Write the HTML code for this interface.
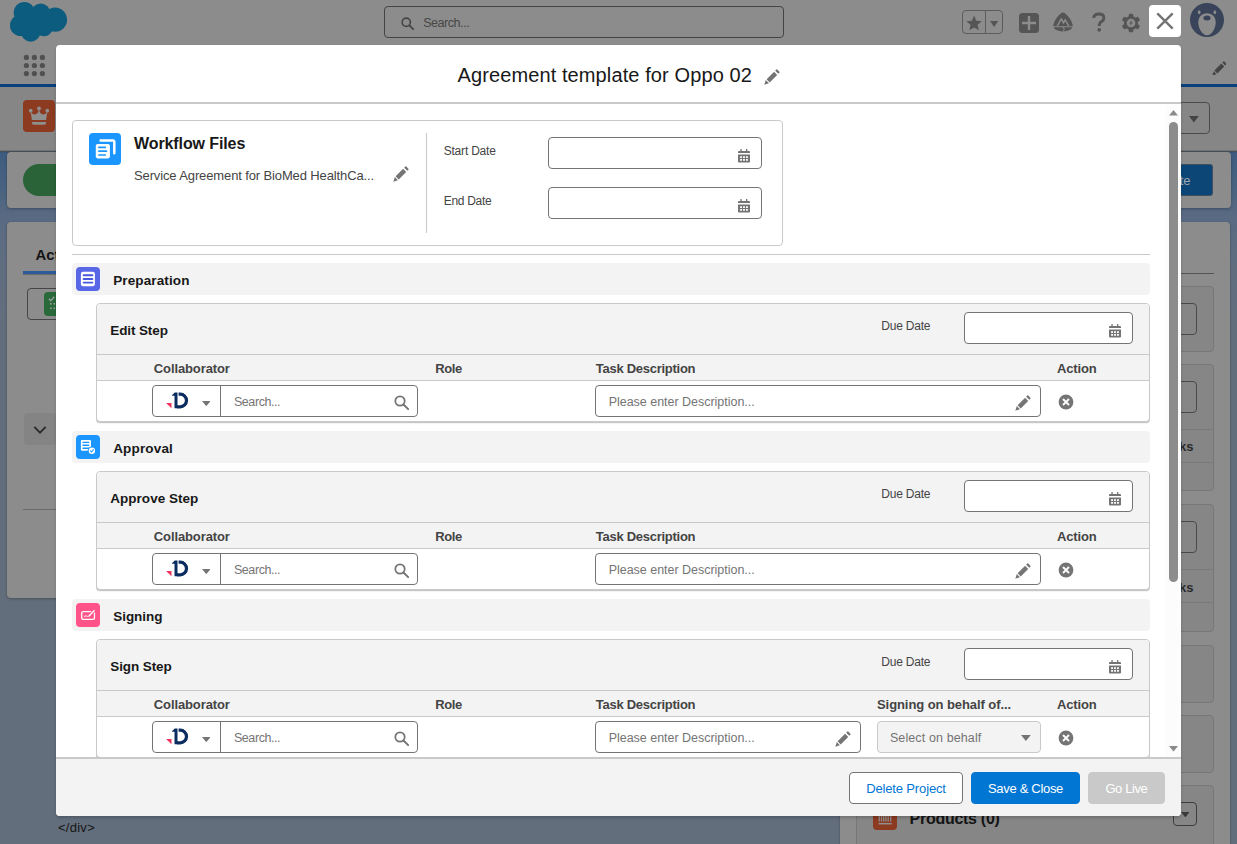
<!DOCTYPE html>
<html lang="en">
<head>
<meta charset="utf-8">
<title>Agreement template for Oppo 02</title>
<style>
*{box-sizing:border-box;margin:0;padding:0}
html,body{width:1237px;height:844px;overflow:hidden}
body{font-family:"Liberation Sans",sans-serif;font-size:13px;color:#181818;background:#636e7c;position:relative}
.abs{position:absolute}
span.t{position:absolute;white-space:nowrap;line-height:1}
/* ---------- dimmed background page ---------- */
#bg{position:absolute;left:0;top:0;width:1237px;height:844px;overflow:hidden;
  background:linear-gradient(180deg,#8c8c8c 0,#8c8c8c 151px,#3d5c80 152px,#4a6380 190px,#586a82 215px,#5f6d81 250px,#626e7e 300px,#636e7c 340px,#636e7c 100%)}
#ghead{left:0;top:0;width:1237px;height:87px;background:#8c8c8c;border-bottom:3px solid #07407a}
#phead{left:0;top:87px;width:1237px;height:64px;background:#868686;border-bottom:1px solid #727272;box-shadow:0 1px 1px rgba(0,0,0,.3)}
.gsearch{left:384px;top:6px;width:400px;height:32px;border:1px solid #444;border-radius:4px}
.dcard{background:#8c8c8c;border-radius:4px;box-shadow:0 1px 3px rgba(0,0,0,.28)}
.icard{background:#868686;border:1px solid #777;border-radius:4px}
.ibox{border:1px solid #4a4a4a;border-radius:4px}
/* ---------- modal ---------- */
#modal{left:56px;top:45px;width:1125px;height:771px;background:#fff;border-radius:4px;overflow:hidden;box-shadow:0 2px 3px rgba(0,0,0,.18)}
.band{width:1078px;height:32px;background:#f3f3f3;border-radius:4px}
.step{width:1054px;height:119px;background:#fff;border:1px solid #c9c9c9;border-radius:4px;box-shadow:0 1px 0 0 #c6c6c6,0 2px 1px rgba(0,0,0,.05);overflow:hidden}
.step .sh{left:0;top:0;width:1052px;height:50px;background:#f3f3f3}
.step .th{left:0;top:50px;width:1052px;height:27px;background:#f3f3f3;border-top:1px solid #c9c9c9;border-bottom:1px solid #c9c9c9}
.inp{background:#fff;border:1px solid #747474;border-radius:4px}
.hb{font-weight:bold;color:#444}
.ph{color:#747474}
.btn{height:32px;border-radius:4px;border:1px solid #747474;background:#fff}
</style>
</head>
<body>
<div id="bg" class="abs">
<div id="ghead" class="abs"></div>
<svg class="abs" style="left:8px;top:0px" width="62" height="44" viewBox="8 0 62 44"><g fill="#0b5c7e"><circle cx="24.3" cy="12.6" r="10.6"/><circle cx="40.7" cy="12.8" r="9.4"/><circle cx="55" cy="19.7" r="12.1"/><circle cx="20.7" cy="25.4" r="10.7"/><circle cx="30.7" cy="32" r="9.7"/><circle cx="44" cy="27.6" r="8.7"/><rect x="22" y="12" width="30" height="18"/></g></svg>
<svg class="abs" style="left:20px;top:50px" width="30" height="30" viewBox="20 50 30 30"><g fill="#505050"><circle cx="26.4" cy="57.4" r="2.600"/><circle cx="34.4" cy="57.4" r="2.600"/><circle cx="42.4" cy="57.4" r="2.600"/><circle cx="26.4" cy="65.5" r="2.600"/><circle cx="34.4" cy="65.5" r="2.600"/><circle cx="42.4" cy="65.5" r="2.600"/><circle cx="26.4" cy="73.6" r="2.600"/><circle cx="34.4" cy="73.6" r="2.600"/><circle cx="42.4" cy="73.6" r="2.600"/></g></svg>
<div class="abs gsearch"></div>
<svg class="abs" style="left:401.3px;top:17.3px" width="13.2" height="13.2" viewBox="0 0 16 16"><circle cx="6.4" cy="6.4" r="5" fill="none" stroke="#444" stroke-width="1.9"/><path d="M10.1 10.1l5 5" stroke="#444" stroke-width="2.1" stroke-linecap="round"/></svg>
<span id="t_gsrch" class="t " style="left:423.2px;top:16.52px;font-size:12.5px;color:#474747;letter-spacing:-0.448px">Search...</span>
<div class="abs" style="left:962px;top:10px;width:41px;height:24px;border:1px solid #5c5c5c;border-radius:4px"></div>
<div class="abs" style="left:985px;top:10px;width:1px;height:24px;background:#5c5c5c"></div>
<svg class="abs" style="left:965.900px;top:15px" width="16.200" height="16.200" viewBox="0 0 24 24"><path fill="#555" d="M12 .8l3.200 7.700 8.300.700-6.300 5.400 1.900 8.100L12 18.400 4.900 22.700l1.900-8.100L.5 9.200l8.300-.7z"/></svg>
<svg class="abs" style="left:990px;top:20.9px" width="8.2" height="6" viewBox="0 0 8.2 6"><path fill="#555" d="M0 0h8.2L4.1 6z"/></svg>
<svg class="abs" style="left:1019px;top:13px" width="20" height="20" viewBox="0 0 20 20"><rect width="20" height="20" rx="3.5" fill="#555"/><path d="M3 10h14M10 3v14" stroke="#8c8c8c" stroke-width="2.4"/></svg>
<svg class="abs" style="left:1053px;top:12.300px" width="20" height="21" viewBox="0 0 20 20" preserveAspectRatio="none"><path fill="#555" d="M10 .4q1.200 0 2.300 1 5.600 4.700 7.200 10.300.3 1.100.1 1.800H.4q-.2-.7.100-1.800Q2.100 6.100 7.700 1.400 8.800.4 10 .4z"/><path fill="#555" d="M.8 14.600h18.400q-.5 1.800-2.600 2.600-3.100 1.300-6.600 1.300T3.400 17.200Q1.300 16.400.8 14.600z"/><path d="M4.300 13.200l4-6.600 2.200 3.600 1.700-2.700 3.500 5.700" fill="none" stroke="#8c8c8c" stroke-width="1.500" stroke-linejoin="miter"/><path d="M9.800 14.400l1.400 1.700-.7 2.600" fill="none" stroke="#8c8c8c" stroke-width="1"/></svg>
<svg class="abs" style="left:1091px;top:11px" width="16" height="22" viewBox="0 0 16 22"><path d="M2.700 7.100q0-4.100 5.200-4.100 5 0 5 3.900 0 2.200-2.400 3.700-2.300 1.400-2.300 3.600v.9" fill="none" stroke="#555" stroke-width="2.900"/><circle cx="8.200" cy="18.800" r="1.850" fill="#555"/></svg>
<svg class="abs" style="left:1121px;top:12.500px" width="20" height="20" viewBox="-10 -10 20 20"><g fill="#555"><rect x="-2.300" y="-9.300" width="4.600" height="5" rx="1.200" transform="rotate(0)"/><rect x="-2.300" y="-9.300" width="4.600" height="5" rx="1.200" transform="rotate(60)"/><rect x="-2.300" y="-9.300" width="4.600" height="5" rx="1.200" transform="rotate(120)"/><rect x="-2.300" y="-9.300" width="4.600" height="5" rx="1.200" transform="rotate(180)"/><rect x="-2.300" y="-9.300" width="4.600" height="5" rx="1.200" transform="rotate(240)"/><rect x="-2.300" y="-9.300" width="4.600" height="5" rx="1.200" transform="rotate(300)"/><circle r="7"/></g><circle r="4.300" fill="#8c8c8c"/><path d="M.9-3.100L-1.900.5h1.700L-.9 3.100 1.900-.5H.2z" fill="#555"/></svg>
<svg class="abs" style="left:1190px;top:2.800px" width="34" height="34" viewBox="0 0 34 34"><circle cx="17" cy="17" r="17" fill="#39445a"/><path d="M17 10.300c5.300 0 8.700 3.700 8.700 9.200 0 5.600-3.800 12.700-8.700 12.700s-8.700-7.100-8.700-12.700c0-5.500 3.400-9.200 8.700-9.200z" fill="#8c8c8c"/><ellipse cx="17" cy="15" rx="3.600" ry="2.500" fill="#39445a"/><ellipse cx="9.200" cy="9.300" rx="1.300" ry="2" fill="#8c8c8c"/><ellipse cx="24.800" cy="9.300" rx="1.300" ry="2" fill="#8c8c8c"/></svg>
<svg class="abs" style="left:1211.7px;top:60.5px" width="14.8" height="14.8" viewBox="0 0 16 16"><g fill="#444"><path d="M0.3 15.7l1.5-4.6 3.1 3.1z"/><path d="M2.6 10.3l7.5-7.5 3.1 3.1-7.5 7.5z"/><path d="M11.2 1.7l1.1-1.1q.5-.5 1 0l2.1 2.1q.5.5 0 1l-1.1 1.1z"/></g></svg>
<div id="phead" class="abs"></div>
<svg class="abs" style="left:23px;top:100px" width="32" height="32" viewBox="0 0 32 32"><rect width="32" height="32" rx="4" fill="#8c3a20"/><g fill="#8f8f8f"><path d="M7.600 11.400L8.900 19.900H23.100L24.400 11.400Q22.600 14.600 20 14.400 17 14.100 16 9.500 15 14.100 12 14.400 9.400 14.600 7.600 11.400z"/><path d="M8.900 22h14.200v.8a2 2 0 0 1-2 2H10.900a2 2 0 0 1-2-2z"/><circle cx="7.700" cy="10.700" r="1.900"/><circle cx="16" cy="8.500" r="1.900"/><circle cx="24.300" cy="10.700" r="1.900"/></g></svg>
<div class="abs" style="left:1178px;top:102px;width:32px;height:32px;border:1px solid #4a4a4a;border-radius:4px"></div>
<svg class="abs" style="left:1189.3px;top:116.3px" width="9.8" height="6.6" viewBox="0 0 9.8 6.6"><path fill="#444" d="M0 0h9.8L4.9 6.6z"/></svg>
<div class="abs dcard" style="left:7px;top:152px;width:1223.500px;height:56px"></div>
<div class="abs" style="left:23px;top:164px;width:600px;height:32px;border-radius:16px;background:#296337"></div>
<div class="abs" style="left:1040px;top:164px;width:173px;height:32px;border-radius:4px;background:#0b4677;box-shadow:0 0 0 1px #3d4f63 inset"></div>
<span id="t_mark" class="t " style="left:1060px;top:173.50px;font-size:13px;color:#9ea6ae;left:auto;right:46.400px">Mark Stage as Complete</span>
<div class="abs dcard" style="left:7px;top:222px;width:820px;height:376px"></div>
<span id="t_actv" class="t " style="left:35.5px;top:247.87px;font-size:14.8px;font-weight:bold;color:#151515">Activity</span>
<div class="abs" style="left:23px;top:273.500px;width:790px;height:1px;background:#6c6c6c"></div>
<div class="abs" style="left:23px;top:271px;width:80px;height:3px;background:#2e5a9a"></div>
<div class="abs" style="left:27px;top:288px;width:120px;height:32px;border:1px solid #454545;border-radius:4px"></div>
<svg class="abs" style="left:44px;top:292px" width="24" height="24" viewBox="0 0 24 24"><rect width="24" height="24" rx="4" fill="#2a6a3a"/><path d="M5 6.800l1.800 1.900 3.500-4" stroke="#9c9c9c" stroke-width="1.300" fill="none"/><g fill="#9c9c9c"><rect x="6" y="11" width="1.600" height="1.600"/><rect x="9.400" y="11" width="1.600" height="1.600"/><rect x="6" y="15.500" width="1.600" height="1.600"/><rect x="9.400" y="15.500" width="1.600" height="1.600"/></g></svg>
<div class="abs" style="left:24px;top:413px;width:32px;height:32px;border-radius:4px;background:#848484"></div>
<svg class="abs" style="left:33px;top:425px" width="14" height="10" viewBox="0 0 14 10"><path d="M1.300 1.800L7 7.600l5.700-5.800" fill="none" stroke="#2a2a2a" stroke-width="1.800"/></svg>
<div class="abs" style="left:23px;top:509px;width:790px;height:1px;background:#6a6a6a"></div>
<div class="abs dcard" style="left:840px;top:222px;width:390px;height:640px"></div>
<div class="abs" style="left:856px;top:273px;width:358px;height:1px;background:#555"></div>
<div class="abs icard" style="left:856px;top:286px;width:358px;height:66px"></div>
<div class="abs ibox" style="left:1000px;top:303px;width:197px;height:32px"></div>
<div class="abs icard" style="left:856px;top:364px;width:358px;height:127px"></div>
<div class="abs ibox" style="left:1000px;top:381px;width:197px;height:32px"></div>
<div class="abs" style="left:857px;top:429px;width:356px;height:1px;background:#7a7a7a"></div><div class="abs" style="left:857px;top:462px;width:356px;height:1px;background:#7a7a7a"></div>
<span id="t_ks1" class="t " style="left:1100px;top:439.70px;font-size:13px;font-weight:bold;color:#2b2b2b;left:auto;right:43.500px">Tasks</span>
<div class="abs icard" style="left:856px;top:504px;width:358px;height:128px"></div>
<div class="abs ibox" style="left:1000px;top:521px;width:197px;height:32px"></div>
<div class="abs" style="left:857px;top:569px;width:356px;height:1px;background:#7a7a7a"></div><div class="abs" style="left:857px;top:602px;width:356px;height:1px;background:#7a7a7a"></div>
<span id="t_ks2" class="t " style="left:1100px;top:580.80px;font-size:13px;font-weight:bold;color:#2b2b2b;left:auto;right:43.500px">Tasks</span>
<div class="abs icard" style="left:856px;top:645px;width:358px;height:58px"></div>
<div class="abs icard" style="left:856px;top:715px;width:358px;height:58px"></div>
<div class="abs icard" style="left:856px;top:785px;width:358px;height:80px"></div>
<svg class="abs" style="left:873px;top:806px" width="24" height="24" viewBox="0 0 24 24"><rect width="24" height="24" rx="4" fill="#8c3a20"/><path d="M6.300 5v10.500M8.500 5v10.500M10.700 5v10.500M12.900 5v10.500M15.200 5v10.500M17.700 5v10.500" stroke="#8f8f8f" stroke-width="1.300"/><path d="M5.500 17.700h13.200" stroke="#8f8f8f" stroke-width="1.500"/></svg>
<span id="t_prod" class="t " style="left:909.6px;top:811.36px;font-size:16px;font-weight:bold;color:#151515;letter-spacing:-0.279px">Products (0)</span>
<div class="abs" style="left:1173px;top:802px;width:24px;height:24px;border:1px solid #3d3d3d;border-radius:4px"></div>
<svg class="abs" style="left:1180.7px;top:811.8px" width="8.6" height="5.4" viewBox="0 0 8.6 5.4"><path fill="#3a3a3a" d="M0 0h8.6L4.3 5.4z"/></svg>
<span id="t_div" class="t " style="left:58px;top:820.60px;font-size:13px;color:#151515;letter-spacing:0.263px">&lt;/div&gt;</span>
</div>
<div id="modal" class="abs">
<div class="abs" style="left:-56px;top:-45px;width:1237px;height:844px">
<div class="abs" style="left:56px;top:102px;width:1125px;height:2px;background:#c9c9c9"></div>
<span id="t_title" class="t " style="left:457.5px;top:65.27px;font-size:20px;letter-spacing:0.107px">Agreement template for Oppo 02</span>
<svg class="abs" style="left:764.3px;top:68.6px" width="16" height="16" viewBox="0 0 16 16"><g fill="#747474"><path d="M0.3 15.7l1.5-4.6 3.1 3.1z"/><path d="M2.6 10.3l7.5-7.5 3.1 3.1-7.5 7.5z"/><path d="M11.2 1.7l1.1-1.1q.5-.5 1 0l2.1 2.1q.5.5 0 1l-1.1 1.1z"/></g></svg>
<div class="abs" style="left:56px;top:104px;width:1125px;height:653px;overflow:hidden"><div class="abs" style="left:-56px;top:-104px;width:1237px;height:900px">
<div class="abs" style="left:72px;top:120px;width:711px;height:126px;border:1px solid #c9c9c9;border-radius:4px;background:#fff"></div>
<svg class="abs" style="left:89px;top:133px" width="32" height="32" viewBox="0 0 32 32"><rect width="32" height="32" rx="4" fill="#1b96ff"/><path d="M11.6 7.6h12.5a1.2 1.2 0 0 1 1.200 1.2v11.4" fill="none" stroke="#fff" stroke-width="2.5" stroke-linecap="round"/><rect x="6.8" y="10.9" width="14.1" height="14.5" rx="1.8" fill="#fff"/><path d="M9.9 14.4h6.4M9.9 18.2h7.6M9.9 22h6.4" stroke="#1b96ff" stroke-width="1.7" stroke-linecap="round"/></svg>
<span id="t_wf" class="t " style="left:134px;top:136.46px;font-size:16px;font-weight:bold;letter-spacing:-0.101px">Workflow Files</span>
<span id="t_svc" class="t " style="left:134px;top:168.80px;font-size:13px;color:#444;letter-spacing:-0.124px">Service Agreement for BioMed HealthCa...</span>
<svg class="abs" style="left:393px;top:166.3px" width="16" height="16" viewBox="0 0 16 16"><g fill="#747474"><path d="M0.3 15.7l1.5-4.6 3.1 3.1z"/><path d="M2.6 10.3l7.5-7.5 3.1 3.1-7.5 7.5z"/><path d="M11.2 1.7l1.1-1.1q.5-.5 1 0l2.1 2.1q.5.5 0 1l-1.1 1.1z"/></g></svg>
<div class="abs" style="left:426px;top:133px;width:1px;height:100px;background:#c9c9c9"></div>
<span id="t_sd" class="t " style="left:443.7px;top:144.84px;font-size:12px;color:#444;letter-spacing:-0.203px">Start Date</span>
<span id="t_ed" class="t " style="left:443.7px;top:194.54px;font-size:12px;color:#444;letter-spacing:-0.306px">End Date</span>
<div class="abs inp" style="left:548px;top:137px;width:214px;height:32px"></div>
<div class="abs inp" style="left:548px;top:187px;width:214px;height:32px"></div>
<svg class="abs" style="left:738px;top:149px" width="12" height="14" viewBox="0 0 12 14"><path fill="#747474" d="M2.4 0h1.3v2H2.4zM8 0h1.3v2H8zM0 2.9Q0 2 .9 2h10.2q.9 0 .9.9v1H0zM0 5.4h12v7.2q0 1-1 1H1q-1 0-1-1zM2.1 7.3v1.6h1.9V7.3zm2.95 0v1.6h1.9V7.3zm2.95 0v1.6h1.9V7.3zM2.1 10.1v1.6h1.9v-1.6zm2.95 0v1.6h1.9v-1.6zm2.95 0v1.6h1.9v-1.6z" fill-rule="evenodd"/></svg>
<svg class="abs" style="left:738px;top:199px" width="12" height="14" viewBox="0 0 12 14"><path fill="#747474" d="M2.4 0h1.3v2H2.4zM8 0h1.3v2H8zM0 2.9Q0 2 .9 2h10.2q.9 0 .9.9v1H0zM0 5.4h12v7.2q0 1-1 1H1q-1 0-1-1zM2.1 7.3v1.6h1.9V7.3zm2.95 0v1.6h1.9V7.3zm2.95 0v1.6h1.9V7.3zM2.1 10.1v1.6h1.9v-1.6zm2.95 0v1.6h1.9v-1.6zm2.95 0v1.6h1.9v-1.6z" fill-rule="evenodd"/></svg>
<div class="abs" style="left:72px;top:254px;width:1078px;height:1px;background:#c9c9c9"></div>
<div class="abs band" style="left:72px;top:263px"></div>
<svg class="abs" style="left:76px;top:267px" width="24" height="24" viewBox="0 0 24 24"><rect width="24" height="24" rx="4" fill="#5867e8"/><rect x="4.9" y="4.7" width="14" height="14.5" rx="2.2" fill="#fff"/><path d="M7.6 8.3h8.8M7.6 11.95h8.8M7.6 15.6h8.8" stroke="#4a58e0" stroke-width="1.9" stroke-linecap="round"/></svg>
<span id="t_prep" class="t " style="left:113.2px;top:273.97px;font-size:13.5px;font-weight:bold;letter-spacing:0.124px">Preparation</span>
<div class="abs step" style="left:96px;top:303px"><div class="abs sh"></div><div class="abs th"></div></div>
<span id="t_edit" class="t " style="left:110.3px;top:324.07px;font-size:13.5px;font-weight:bold;letter-spacing:-0.113px">Edit Step</span>
<span id="t_dueedit" class="t " style="left:881.3px;top:320.14px;font-size:12px;color:#444;letter-spacing:-0.213px">Due Date</span>
<div class="abs inp" style="left:964px;top:312px;width:169px;height:32px"></div>
<svg class="abs" style="left:1109px;top:324px" width="12" height="14" viewBox="0 0 12 14"><path fill="#747474" d="M2.4 0h1.3v2H2.4zM8 0h1.3v2H8zM0 2.9Q0 2 .9 2h10.2q.9 0 .9.9v1H0zM0 5.4h12v7.2q0 1-1 1H1q-1 0-1-1zM2.1 7.3v1.6h1.9V7.3zm2.95 0v1.6h1.9V7.3zm2.95 0v1.6h1.9V7.3zM2.1 10.1v1.6h1.9v-1.6zm2.95 0v1.6h1.9v-1.6zm2.95 0v1.6h1.9v-1.6z" fill-rule="evenodd"/></svg>
<span id="t_coledit" class="t hb" style="left:153.8px;top:361.80px;font-size:13px;letter-spacing:-0.108px">Collaborator</span>
<span id="t_roleedit" class="t hb" style="left:435.3px;top:361.80px;font-size:13px;letter-spacing:-0.443px">Role</span>
<span id="t_taskedit" class="t hb" style="left:595.8px;top:361.80px;font-size:13px;letter-spacing:-0.269px">Task Description</span>
<span id="t_actedit" class="t hb" style="left:1057px;top:361.80px;font-size:13px;letter-spacing:-0.159px">Action</span>
<div class="abs inp" style="left:152px;top:385px;width:266px;height:32px"></div>
<div class="abs" style="left:220px;top:385px;width:1px;height:32px;background:#747474"></div>
<svg class="abs" style="left:165.7px;top:391.8px" width="24" height="18" viewBox="0 0 24 18"><path fill="#f0325c" d="M0.100 10.900h5.400v5.400z"/><path fill="#0b2c5f" d="M8.500 0.500h3v15.800h-3zM8.600 0.500v3.300H5.600z"/><path fill="none" stroke="#0b2c5f" stroke-width="3.200" d="M12.600 2.200h1.600a6.300 6.300 0 0 1 0 12.600H11"/></svg>
<svg class="abs" style="left:201.6px;top:401.3px" width="8.6" height="5.2" viewBox="0 0 8.6 5.2"><path fill="#747474" d="M0 0h8.6L4.3 5.2z"/></svg>
<span id="t_srchedit" class="t ph" style="left:233.9px;top:396.12px;font-size:12.5px;letter-spacing:-0.415px">Search...</span>
<svg class="abs" style="left:394px;top:394.5px" width="15" height="15" viewBox="0 0 16 16"><circle cx="6.4" cy="6.4" r="5" fill="none" stroke="#747474" stroke-width="1.9"/><path d="M10.1 10.1l5 5" stroke="#747474" stroke-width="2.1" stroke-linecap="round"/></svg>
<div class="abs inp" style="left:595px;top:385px;width:446px;height:32px"></div>
<span id="t_descedit" class="t ph" style="left:608.7px;top:396.12px;font-size:12.5px;letter-spacing:-0.023px">Please enter Description...</span>
<svg class="abs" style="left:1015px;top:394.7px" width="16" height="16" viewBox="0 0 16 16"><g fill="#747474"><path d="M0.3 15.7l1.5-4.6 3.1 3.1z"/><path d="M2.6 10.3l7.5-7.5 3.1 3.1-7.5 7.5z"/><path d="M11.2 1.7l1.1-1.1q.5-.5 1 0l2.1 2.1q.5.5 0 1l-1.1 1.1z"/></g></svg>
<svg class="abs" style="left:1058px;top:394px" width="16" height="16" viewBox="0 0 16 16"><circle cx="8" cy="8" r="7.4" fill="#747474"/><path d="M5 5l6 6M11 5l-6 6" stroke="#fff" stroke-width="1.9" stroke-linecap="butt" fill="none"/></svg>
<div class="abs band" style="left:72px;top:431px"></div>
<svg class="abs" style="left:76px;top:435px" width="24" height="24" viewBox="0 0 24 24"><rect width="24" height="24" rx="4" fill="#1b96ff"/><rect x="4.9" y="4.9" width="10.1" height="10.8" rx="1.2" fill="#fff"/><path d="M7 7.4h5.7M7 10.3h5.7M7 13.2h5.7" stroke="#1b96ff" stroke-width="1.4" stroke-linecap="round"/><circle cx="15.9" cy="15.7" r="4.3" fill="#1b96ff"/><circle cx="15.9" cy="15.7" r="3.2" fill="#fff"/><path d="M14.3 15.7l1.2 1.3 2.1-2.7" stroke="#1b96ff" stroke-width="1.1" fill="none"/></svg>
<span id="t_appr" class="t " style="left:113.2px;top:441.97px;font-size:13.5px;font-weight:bold;letter-spacing:0.161px">Approval</span>
<div class="abs step" style="left:96px;top:471px"><div class="abs sh"></div><div class="abs th"></div></div>
<span id="t_approve" class="t " style="left:110.3px;top:492.07px;font-size:13.5px;font-weight:bold;letter-spacing:0.02px">Approve Step</span>
<span id="t_dueapprove" class="t " style="left:881.3px;top:488.14px;font-size:12px;color:#444;letter-spacing:-0.213px">Due Date</span>
<div class="abs inp" style="left:964px;top:480px;width:169px;height:32px"></div>
<svg class="abs" style="left:1109px;top:492px" width="12" height="14" viewBox="0 0 12 14"><path fill="#747474" d="M2.4 0h1.3v2H2.4zM8 0h1.3v2H8zM0 2.9Q0 2 .9 2h10.2q.9 0 .9.9v1H0zM0 5.4h12v7.2q0 1-1 1H1q-1 0-1-1zM2.1 7.3v1.6h1.9V7.3zm2.95 0v1.6h1.9V7.3zm2.95 0v1.6h1.9V7.3zM2.1 10.1v1.6h1.9v-1.6zm2.95 0v1.6h1.9v-1.6zm2.95 0v1.6h1.9v-1.6z" fill-rule="evenodd"/></svg>
<span id="t_colapprove" class="t hb" style="left:153.8px;top:529.80px;font-size:13px;letter-spacing:-0.108px">Collaborator</span>
<span id="t_roleapprove" class="t hb" style="left:435.3px;top:529.80px;font-size:13px;letter-spacing:-0.443px">Role</span>
<span id="t_taskapprove" class="t hb" style="left:595.8px;top:529.80px;font-size:13px;letter-spacing:-0.269px">Task Description</span>
<span id="t_actapprove" class="t hb" style="left:1057px;top:529.80px;font-size:13px;letter-spacing:-0.159px">Action</span>
<div class="abs inp" style="left:152px;top:553px;width:266px;height:32px"></div>
<div class="abs" style="left:220px;top:553px;width:1px;height:32px;background:#747474"></div>
<svg class="abs" style="left:165.7px;top:559.8px" width="24" height="18" viewBox="0 0 24 18"><path fill="#f0325c" d="M0.100 10.900h5.400v5.400z"/><path fill="#0b2c5f" d="M8.500 0.500h3v15.800h-3zM8.600 0.500v3.300H5.600z"/><path fill="none" stroke="#0b2c5f" stroke-width="3.200" d="M12.600 2.200h1.600a6.300 6.300 0 0 1 0 12.600H11"/></svg>
<svg class="abs" style="left:201.6px;top:569.3px" width="8.6" height="5.2" viewBox="0 0 8.6 5.2"><path fill="#747474" d="M0 0h8.6L4.3 5.2z"/></svg>
<span id="t_srchapprove" class="t ph" style="left:233.9px;top:564.12px;font-size:12.5px;letter-spacing:-0.415px">Search...</span>
<svg class="abs" style="left:394px;top:562.5px" width="15" height="15" viewBox="0 0 16 16"><circle cx="6.4" cy="6.4" r="5" fill="none" stroke="#747474" stroke-width="1.9"/><path d="M10.1 10.1l5 5" stroke="#747474" stroke-width="2.1" stroke-linecap="round"/></svg>
<div class="abs inp" style="left:595px;top:553px;width:446px;height:32px"></div>
<span id="t_descapprove" class="t ph" style="left:608.7px;top:564.12px;font-size:12.5px;letter-spacing:-0.023px">Please enter Description...</span>
<svg class="abs" style="left:1015px;top:562.7px" width="16" height="16" viewBox="0 0 16 16"><g fill="#747474"><path d="M0.3 15.7l1.5-4.6 3.1 3.1z"/><path d="M2.6 10.3l7.5-7.5 3.1 3.1-7.5 7.5z"/><path d="M11.2 1.7l1.1-1.1q.5-.5 1 0l2.1 2.1q.5.5 0 1l-1.1 1.1z"/></g></svg>
<svg class="abs" style="left:1058px;top:562px" width="16" height="16" viewBox="0 0 16 16"><circle cx="8" cy="8" r="7.4" fill="#747474"/><path d="M5 5l6 6M11 5l-6 6" stroke="#fff" stroke-width="1.9" stroke-linecap="butt" fill="none"/></svg>
<div class="abs band" style="left:72px;top:599px"></div>
<svg class="abs" style="left:76px;top:603px" width="24" height="24" viewBox="0 0 24 24"><rect width="24" height="24" rx="4" fill="#ff538a"/><rect x="5.7" y="8.6" width="12.8" height="7.8" rx="1.6" fill="none" stroke="#fff" stroke-width="1.3"/><path d="M8 13.6q1.2-1.1 2.3-.6t2.2.4" stroke="#fff" stroke-width="1" fill="none"/><path d="M12.6 13.5l5.9-6.3" stroke="#ff538a" stroke-width="3.2"/><path d="M12.6 13.5l5.9-6.3" stroke="#fff" stroke-width="1.3"/></svg>
<span id="t_signing" class="t " style="left:113.2px;top:609.97px;font-size:13.5px;font-weight:bold;letter-spacing:-0.029px">Signing</span>
<div class="abs step" style="left:96px;top:639px"><div class="abs sh"></div><div class="abs th"></div></div>
<span id="t_sign" class="t " style="left:110.3px;top:660.07px;font-size:13.5px;font-weight:bold;letter-spacing:-0.096px">Sign Step</span>
<span id="t_duesign" class="t " style="left:881.3px;top:656.14px;font-size:12px;color:#444;letter-spacing:-0.213px">Due Date</span>
<div class="abs inp" style="left:964px;top:648px;width:169px;height:32px"></div>
<svg class="abs" style="left:1109px;top:660px" width="12" height="14" viewBox="0 0 12 14"><path fill="#747474" d="M2.4 0h1.3v2H2.4zM8 0h1.3v2H8zM0 2.9Q0 2 .9 2h10.2q.9 0 .9.9v1H0zM0 5.4h12v7.2q0 1-1 1H1q-1 0-1-1zM2.1 7.3v1.6h1.9V7.3zm2.95 0v1.6h1.9V7.3zm2.95 0v1.6h1.9V7.3zM2.1 10.1v1.6h1.9v-1.6zm2.95 0v1.6h1.9v-1.6zm2.95 0v1.6h1.9v-1.6z" fill-rule="evenodd"/></svg>
<span id="t_colsign" class="t hb" style="left:153.8px;top:697.80px;font-size:13px;letter-spacing:-0.108px">Collaborator</span>
<span id="t_rolesign" class="t hb" style="left:435.3px;top:697.80px;font-size:13px;letter-spacing:-0.443px">Role</span>
<span id="t_tasksign" class="t hb" style="left:595.8px;top:697.80px;font-size:13px;letter-spacing:-0.269px">Task Description</span>
<span id="t_actsign" class="t hb" style="left:1057px;top:697.80px;font-size:13px;letter-spacing:-0.159px">Action</span>
<div class="abs inp" style="left:152px;top:721px;width:266px;height:32px"></div>
<div class="abs" style="left:220px;top:721px;width:1px;height:32px;background:#747474"></div>
<svg class="abs" style="left:165.7px;top:727.8px" width="24" height="18" viewBox="0 0 24 18"><path fill="#f0325c" d="M0.100 10.900h5.400v5.400z"/><path fill="#0b2c5f" d="M8.500 0.500h3v15.800h-3zM8.600 0.500v3.300H5.600z"/><path fill="none" stroke="#0b2c5f" stroke-width="3.200" d="M12.600 2.200h1.600a6.300 6.300 0 0 1 0 12.600H11"/></svg>
<svg class="abs" style="left:201.6px;top:737.3px" width="8.6" height="5.2" viewBox="0 0 8.6 5.2"><path fill="#747474" d="M0 0h8.6L4.3 5.2z"/></svg>
<span id="t_srchsign" class="t ph" style="left:233.9px;top:732.12px;font-size:12.5px;letter-spacing:-0.415px">Search...</span>
<svg class="abs" style="left:394px;top:730.5px" width="15" height="15" viewBox="0 0 16 16"><circle cx="6.4" cy="6.4" r="5" fill="none" stroke="#747474" stroke-width="1.9"/><path d="M10.1 10.1l5 5" stroke="#747474" stroke-width="2.1" stroke-linecap="round"/></svg>
<div class="abs inp" style="left:595px;top:721px;width:266px;height:32px"></div>
<span id="t_descsign" class="t ph" style="left:608.7px;top:732.12px;font-size:12.5px;letter-spacing:-0.023px">Please enter Description...</span>
<svg class="abs" style="left:835px;top:730.7px" width="16" height="16" viewBox="0 0 16 16"><g fill="#747474"><path d="M0.3 15.7l1.5-4.6 3.1 3.1z"/><path d="M2.6 10.3l7.5-7.5 3.1 3.1-7.5 7.5z"/><path d="M11.2 1.7l1.1-1.1q.5-.5 1 0l2.1 2.1q.5.5 0 1l-1.1 1.1z"/></g></svg>
<span id="t_sob" class="t hb" style="left:877px;top:697.80px;font-size:13px;letter-spacing:-0.077px">Signing on behalf of...</span>
<div class="abs" style="left:877px;top:721px;width:164px;height:32px;background:#f3f3f3;border:1px solid #c9c9c9;border-radius:4px"></div>
<span id="t_selob" class="t ph" style="left:889.9px;top:732.12px;font-size:12.5px;letter-spacing:0.115px">Select on behalf</span>
<svg class="abs" style="left:1020.8px;top:735.3px" width="9.8" height="6" viewBox="0 0 9.8 6"><path fill="#747474" d="M0 0h9.8L4.9 6z"/></svg>
<svg class="abs" style="left:1058px;top:730px" width="16" height="16" viewBox="0 0 16 16"><circle cx="8" cy="8" r="7.4" fill="#747474"/><path d="M5 5l6 6M11 5l-6 6" stroke="#fff" stroke-width="1.9" stroke-linecap="butt" fill="none"/></svg>
<div class="abs" style="left:1166px;top:105px;width:14px;height:652px;background:#fcfcfc"></div>
<svg class="abs" style="left:1169px;top:109.5px" width="9" height="6" viewBox="0 0 9 6"><path fill="#8b8b8b" d="M0 5.5L4.5 0 9 5.5z"/></svg>
<div class="abs" style="left:1169px;top:122px;width:9px;height:460px;background:#8c8c8c;border-radius:5px"></div>
<svg class="abs" style="left:1169px;top:746px" width="9" height="6" viewBox="0 0 9 6"><path fill="#8b8b8b" d="M0 0h9L4.500 5.500z"/></svg>
</div></div>
<div class="abs" style="left:56px;top:757px;width:1125px;height:59px;background:#f3f3f3;border-top:2px solid #c9c9c9"></div>
<div class="abs btn" style="left:849px;top:772px;width:114px"></div>
<span id="t_del" class="t " style="left:866.2px;top:781.50px;font-size:13px;color:#0176d3;letter-spacing:-0.147px">Delete Project</span>
<div class="abs btn" style="left:971px;top:772px;width:109px;background:#0176d3;border-color:#0176d3"></div>
<span id="t_save" class="t " style="left:988px;top:781.50px;font-size:13px;color:#fff;letter-spacing:-0.314px">Save &amp; Close</span>
<div class="abs btn" style="left:1088px;top:772px;width:77px;background:#c9c9c9;border-color:#c9c9c9"></div>
<span id="t_live" class="t " style="left:1105.4px;top:781.50px;font-size:13px;color:#fff;letter-spacing:-0.402px">Go Live</span>
</div>
</div>
<div class="abs" style="left:1149px;top:5px;width:32px;height:32px;background:#fff;border-radius:4px"></div>
<svg class="abs" style="left:1156px;top:12px" width="18" height="18" viewBox="0 0 18 18"><path d="M1.300 1.300l15.400 15.400M16.700 1.300L1.300 16.700" stroke="#747474" stroke-width="2.400" fill="none"/></svg>
</body>
</html>
